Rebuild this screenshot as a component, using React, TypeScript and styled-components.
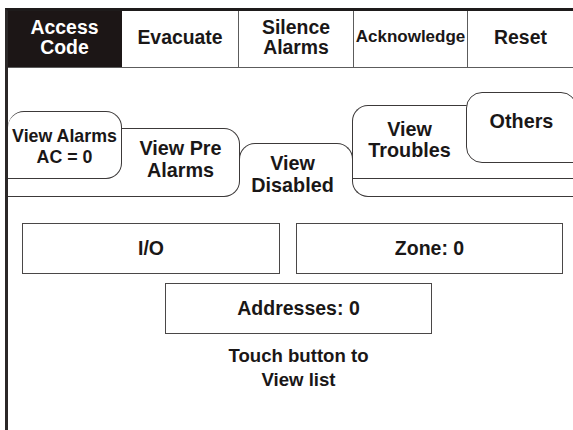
import styled, { createGlobalStyle } from "styled-components";

const GlobalStyle = createGlobalStyle`
  html,
  body {
    margin: 0;
    padding: 0;
    background: #ffffff;
  }

  body {
    width: 573px;
    height: 430px;
    overflow: hidden;
    font-family: "Liberation Sans", Arial, sans-serif;
  }
`;

const headerItems = [
  { label: ["Access", "Code"], width: 114, active: true },
  { label: ["Evacuate"], width: 117 },
  { label: ["Silence", "Alarms"], width: 115 },
  { label: ["Acknowledge"], width: 114, size: 17 },
  { label: ["Reset"] },
];

const Frame = styled.main`
  box-sizing: border-box;
  min-height: 422px;
  margin: 8px 0 0 5px;
  overflow: hidden;
  border-top: 3px solid #1e1b1b;
  border-left: 3px solid #2b2828;
  color: #1a1717;
  font-family: "Liberation Sans", Arial, sans-serif;
  font-weight: 700;
`;

const Header = styled.nav`
  display: flex;
  box-sizing: border-box;
  height: 57px;
  border-bottom: 1px solid #5c5c5c;
`;

const HeaderCell = styled.button<{ $width?: number; $active?: boolean; $size?: number }>`
  display: flex;
  flex: ${(p) => (p.$width ? `0 0 ${p.$width}px` : "1 1 auto")};
  flex-direction: column;
  align-items: center;
  justify-content: center;
  box-sizing: border-box;
  margin: 0;
  padding: 0 0 5px;
  border: 0;
  border-right: ${(p) => (p.$width ? "1px solid" : "0")};
  border-color: ${(p) => (p.$active ? "#1c1616" : "#5c5c5c")};
  background: ${(p) => (p.$active ? "#1c1616" : "#ffffff")};
  color: ${(p) => (p.$active ? "#ffffff" : "#1a1717")};
  font-family: inherit;
  font-size: ${(p) => p.$size ?? 19.4}px;
  font-weight: 700;
  line-height: 20px;
`;

const Deck = styled.div`
  display: grid;
  grid-template-columns: 114px 118px 112px 114px 1fr;
  grid-template-rows: 105px;
  margin-top: 24px;
`;

const Tab = styled.button<{
  $cols: string;
  $top: number;
  $height: number;
  $layer: number;
  $radius: string;
}>`
  display: flex;
  flex-direction: column;
  align-items: center;
  justify-content: flex-start;
  grid-row: 1;
  grid-column: ${(p) => p.$cols};
  align-self: start;
  z-index: ${(p) => p.$layer};
  box-sizing: border-box;
  height: ${(p) => p.$height}px;
  margin: ${(p) => p.$top}px 0 0;
  padding: 0;
  border: 1px solid #3c3939;
  border-radius: ${(p) => p.$radius};
  background: #ffffff;
  color: #1a1717;
  font-family: inherit;
  font-size: 19.8px;
  font-weight: 700;
  line-height: 22px;
  text-align: center;
`;

const AlarmsTab = styled(Tab)`
  padding-top: 14px;
  border-left: 0;
  font-size: 17.8px;
  line-height: 21px;
`;

const PreAlarmsTab = styled(Tab)`
  padding: 8px 0 0 114px;
  border-left: 0;
`;

const DisabledTab = styled(Tab)`
  margin-left: -1px;
  margin-right: -1px;
  padding: 8px 7px 0 0;
  overflow: visible;
  border-bottom: 0;
`;

const TroublesTab = styled(Tab)`
  align-items: stretch;
  border-right: 0;
  line-height: 21px;
`;

const TroublesLabel = styled.span`
  flex: 1;
  width: 113px;
  padding-top: 13px;
`;

const TroublesStrip = styled.span`
  height: 17px;
  border-top: 1px solid #3c3939;
`;

const OthersTab = styled(Tab)`
  width: 111px;
  padding-top: 18px;
  line-height: 21px;
`;

const Panel = styled.section`
  display: flex;
  flex-direction: column;
  align-items: flex-start;
  padding: 26px 0 0 14px;
`;

const CountRow = styled.div`
  display: flex;
  gap: 16px;
`;

const CountButton = styled.button<{ $width: number }>`
  box-sizing: border-box;
  width: ${(p) => p.$width}px;
  height: 51px;
  margin: 0;
  padding: 0;
  border: 1px solid #4a4747;
  background: #ffffff;
  color: #1a1717;
  font-family: inherit;
  font-size: 19.5px;
  font-weight: 700;
`;

const CenterColumn = styled.div`
  display: flex;
  flex-direction: column;
  align-items: center;
  width: 267px;
  margin: 9px 0 0 143px;
`;

const Hint = styled.p`
  margin: 10px 0 0;
  font-size: 18.6px;
  line-height: 24px;
  text-align: center;
`;

export default function App() {
  return (
    <>
      <GlobalStyle />
      <Frame>
        <Header>
          {headerItems.map((item) => (
            <HeaderCell
              key={item.label.join(" ")}
              $width={item.width}
              $active={item.active}
              $size={item.size}
            >
              {item.label.map((line) => (
                <span key={line}>{line}</span>
              ))}
            </HeaderCell>
          ))}
        </Header>

        <Deck>
          <AlarmsTab $cols="1 / 2" $top={19} $height={68} $layer={3} $radius="16px 16px 16px 0">
            <span>View Alarms</span>
            <span>AC = 0</span>
          </AlarmsTab>
          <PreAlarmsTab $cols="1 / 3" $top={36} $height={69} $layer={2} $radius="0 16px 16px 0">
            <span>View Pre</span>
            <span>Alarms</span>
          </PreAlarmsTab>
          <DisabledTab $cols="3 / 4" $top={51} $height={38} $layer={1} $radius="16px 16px 0 0">
            <span>View</span>
            <span>Disabled</span>
          </DisabledTab>
          <TroublesTab $cols="4 / 6" $top={13} $height={92} $layer={2} $radius="16px 0 0 16px">
            <TroublesLabel>
              View
              <br />
              Troubles
            </TroublesLabel>
            <TroublesStrip />
          </TroublesTab>
          <OthersTab $cols="5 / 6" $top={0} $height={71} $layer={3} $radius="16px 16px 0 16px">
            <span>Others</span>
          </OthersTab>
        </Deck>

        <Panel>
          <CountRow>
            <CountButton $width={258}>I/O</CountButton>
            <CountButton $width={267}>Zone: 0</CountButton>
          </CountRow>
          <CenterColumn>
            <CountButton $width={267}>Addresses: 0</CountButton>
            <Hint>
              Touch button to
              <br />
              View list
            </Hint>
          </CenterColumn>
        </Panel>
      </Frame>
    </>
  );
}
